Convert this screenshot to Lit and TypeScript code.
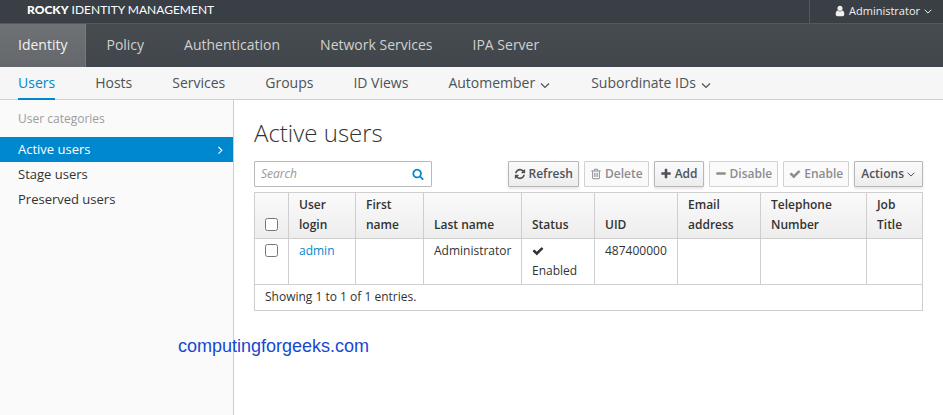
import { LitElement, html, css, svg, nothing } from "lit";
import { customElement, property } from "lit/decorators.js";

const glyphs: Record<string, string> = {
  user: "M1536 1399q0 109-62.5 187t-150.5 78h-854q-88 0-150.5-78t-62.5-187q0-85 8.5-160.5t31.5-152 58.5-131 94-89 134.5-34.5q131 128 313 128t313-128q76 0 134.5 34.5t94 89 58.5 131 31.5 152 8.5 160.5zm-256-887q0 159-112.5 271.5t-271.5 112.5-271.5-112.5-112.5-271.5 112.5-271.5 271.5-112.5 271.5 112.5 112.5 271.5z",
  refresh: "M1639 1056q0 5-1 7-64 268-268 434.5t-478 166.5q-146 0-282.5-55t-243.5-157l-129 129q-19 19-45 19t-45-19-19-45v-448q0-26 19-45t45-19h448q26 0 45 19t19 45-19 45l-137 137q71 66 161 102t187 36q134 0 250-65t186-179q11-17 53-117 8-23 30-23h192q13 0 22.5 9.5t9.5 22.5zm25-800v448q0 26-19 45t-45 19h-448q-26 0-45-19t-19-45 19-45l138-138q-148-137-349-137-134 0-250 65t-186 179q-11 17-53 117-8 23-30 23h-199q-13 0-22.5-9.5t-9.5-22.5v-7q65-268 270-434.5t480-166.5q146 0 284 55.5t245 156.5l130-129q19-19 45-19t45 19 19 45z",
  trash: "M704 736v576q0 14-9 23t-23 9h-64q-14 0-23-9t-9-23v-576q0-14 9-23t23-9h64q14 0 23 9t9 23zm256 0v576q0 14-9 23t-23 9h-64q-14 0-23-9t-9-23v-576q0-14 9-23t23-9h64q14 0 23 9t9 23zm256 0v576q0 14-9 23t-23 9h-64q-14 0-23-9t-9-23v-576q0-14 9-23t23-9h64q14 0 23 9t9 23zm128 724v-948h-896v948q0 22 7 40.5t14.5 27 10.5 8.5h832q3 0 10.5-8.5t14.5-27 7-40.5zm-672-1076h448l-48-117q-7-9-17-11h-317q-10 2-17 11zm928 32v64q0 14-9 23t-23 9h-96v948q0 83-47 143.5t-113 60.5h-832q-66 0-113-58.5t-47-141.5v-952h-96q-14 0-23-9t-9-23v-64q0-14 9-23t23-9h309l70-167q15-37 54-63t79-26h320q40 0 79 26t54 63l70 167h309q14 0 23 9t9 23z",
  plus: "M1600 736v192q0 40-28 68t-68 28h-416v416q0 40-28 68t-68 28h-192q-40 0-68-28t-28-68v-416h-416q-40 0-68-28t-28-68v-192q0-40 28-68t68-28h416v-416q0-40 28-68t68-28h192q40 0 68 28t28 68v416h416q40 0 68 28t28 68z",
  minus: "M1600 736v192q0 40-28 68t-68 28h-1216q-40 0-68-28t-28-68v-192q0-40 28-68t68-28h1216q40 0 68 28t28 68z",
  check: "M1671 566q0 40-28 68l-724 724-136 136q-28 28-68 28t-68-28l-136-136-362-362q-28-28-28-68t28-68l136-136q28-28 68-28t68 28l294 295 656-657q28-28 68-28t68 28l136 136q28 28 28 68z",
  search: "M1216 832q0-185-131.5-316.5t-316.5-131.5-316.5 131.5-131.5 316.5 131.5 316.5 316.5 131.5 316.5-131.5 131.5-316.5zm512 832q0 52-38 90t-90 38q-54 0-90-38l-343-342q-179 124-399 124-143 0-273.5-55.5t-225-150-150-225-55.5-273.5 55.5-273.5 150-225 225-150 273.5-55.5 273.5 55.5 225 150 150 225 55.5 273.5q0 220-124 399l343 343q37 37 37 90z",
};

const chevrons: Record<string, string> = {
  down: "M2 4.5 6 8.5 10 4.5",
  right: "M4.5 3 7.8 6.3 4.5 9.6",
};

@customElement("ipa-icon")
export class IpaIcon extends LitElement {
  @property() name = "";

  static styles = css`
    :host { display: inline-flex; flex: none; width: 12px; height: 12px; }
    .glyph { width: 100%; height: 100%; display: block; }
  `;

  render() {
    const line = chevrons[this.name];
    return line
      ? html`<svg class="glyph" viewBox="0 0 12 12" aria-hidden="true">
          ${svg`<path d=${line} fill="none" stroke="currentColor" stroke-width="1.2" />`}
        </svg>`
      : html`<svg class="glyph" viewBox="0 0 1792 1792" aria-hidden="true">
          ${svg`<path d=${glyphs[this.name]} fill="currentColor" />`}
        </svg>`;
  }
}

const primary = ["Identity", "Policy", "Authentication", "Network Services", "IPA Server"];
const secondary = [
  { label: "Users" },
  { label: "Hosts" },
  { label: "Services" },
  { label: "Groups" },
  { label: "ID Views" },
  { label: "Automember", menu: true },
  { label: "Subordinate IDs", menu: true },
];
const categories = ["Active users", "Stage users", "Preserved users"];
const actions = [
  { label: "Refresh", icon: "refresh", off: false },
  { label: "Delete", icon: "trash", off: true },
  { label: "Add", icon: "plus", off: false },
  { label: "Disable", icon: "minus", off: true },
  { label: "Enable", icon: "check", off: true },
];
const columns = [
  { label: "User login", width: 67 },
  { label: "First name", width: 68 },
  { label: "Last name", width: 98 },
  { label: "Status", width: 73 },
  { label: "UID", width: 83 },
  { label: "Email address", width: 83 },
  { label: "Telephone Number", width: 106 },
  { label: "Job Title", width: 56 },
];

@customElement("app-root")
export class AppRoot extends LitElement {
  static styles = css`
    :host {
      display: flex;
      flex-direction: column;
      position: relative;
      min-height: 100vh;
      background: #fff;
      color: #333;
      font: 12px/20px "Open Sans", "Noto Sans", sans-serif;
    }
    * { box-sizing: border-box; }
    a { color: inherit; text-decoration: none; }
    ul { list-style: none; margin: 0; padding: 0; }

    .masthead {
      display: flex;
      justify-content: space-between;
      height: 23px;
      background: #393f45;
      color: #fff;
    }
    .brand { padding-left: 27px; font: 12px/20px Lato, "Open Sans", sans-serif; }
    .brand b { font-weight: 900; }
    .account {
      display: flex;
      align-items: center;
      gap: 3px;
      padding: 0 10px 2px 24px;
      border: 0;
      border-left: 1px solid #53595f;
      background: none;
      color: #f0f0f0;
      font: 11px/20px "Open Sans", sans-serif;
    }
    .account .caret { width: 10px; height: 10px; }

    .primary {
      display: flex;
      height: 44px;
      border-top: 1px solid #53595d;
      background: linear-gradient(#474c50, #41464c);
      color: #d1d1d1;
      font-size: 14px;
      line-height: 42px;
    }
    .primary a { padding: 0 20px; }
    .primary a:first-child { padding: 0 18px; border-right: 1px solid #74797c; }
    .primary .current { background: linear-gradient(#6e7275, #64686c); color: #f1f1f1; }

    .secondary {
      display: flex;
      gap: 40px;
      height: 33px;
      padding: 0 18px;
      border-bottom: 1px solid #cecece;
      background: #f6f6f6;
      color: #4d5258;
      font-size: 14px;
      line-height: 32px;
    }
    .secondary a { display: flex; gap: 4px; height: 33px; white-space: nowrap; }
    .secondary .current { color: #0088ce; border-bottom: 2px solid #0088ce; }
    .secondary ipa-icon { margin-top: 12px; }

    .body { display: flex; flex: 1; }
    .side {
      flex: none;
      width: 234px;
      border-right: 1px solid #cecece;
      background: #fafafa;
      font-size: 13px;
      line-height: 25px;
    }
    .side h2 { margin: 0; padding: 6px 18px; color: #9c9c9c; font: 12px/25px "Open Sans", sans-serif; }
    .side a { display: flex; align-items: center; justify-content: space-between; padding: 0 7px 0 18px; }
    .side .current { background: #0088ce; color: #fff; }

    .main { flex: 1; min-width: 0; padding: 18px 20px; }
    h1 { margin: 0 0 14px; font-size: 24px; line-height: 29px; font-weight: 300; }

    .toolbar { display: flex; align-items: center; justify-content: space-between; margin-bottom: 5px; }
    .search {
      display: flex;
      align-items: center;
      width: 178px;
      height: 26px;
      border: 1px solid #bababa;
      border-radius: 1px;
    }
    .search input {
      flex: 1;
      min-width: 0;
      padding: 0 6px;
      border: 0;
      outline: 0;
      background: none;
      color: #333;
      font: 12px/20px "Open Sans", sans-serif;
    }
    .search input::placeholder { color: #999; font-style: italic; opacity: 1; }
    .search button { display: flex; padding: 0 7px; border: 0; background: none; color: #0088ce; }
    .buttons { display: flex; gap: 5px; }
    .btn {
      display: flex;
      align-items: center;
      gap: 3px;
      height: 26px;
      padding: 0 5px;
      border: 1px solid #b7b7b7;
      border-radius: 1px;
      background: linear-gradient(#fafafa, #ededed);
      box-shadow: 0 2px 3px rgba(3, 3, 3, 0.1);
      color: #4d5258;
      font: 600 12px/22px "Open Sans", sans-serif;
      white-space: nowrap;
    }
    .btn:disabled { border-color: #d1d1d1; background: #fafafa; box-shadow: none; color: #8b8d8f; }
    .btn .caret { width: 10px; height: 10px; }
    .btn.menu { gap: 2px; padding: 0 6px; }

    table { width: 100%; table-layout: fixed; border-collapse: collapse; border: 1px solid #cecece; }
    .pick { width: 34px; }
    th, td { padding: 2px 10px 3px; border: 1px solid #cecece; text-align: left; }
    th { vertical-align: bottom; font-weight: 600; }
    td { vertical-align: top; }
    thead { background: linear-gradient(#fafafa, #ededed); }
    tbody a { color: #0088ce; }
    td input, th input { display: block; width: 13px; height: 13px; margin: 3px 0 4px; }
    .state { display: block; }
    td ipa-icon { display: block; margin: 4px 0; }

    .watermark {
      position: absolute;
      left: 178px;
      top: 335px;
      color: #1549d0;
      font: 18px/22px "Liberation Sans", Arial, sans-serif;
    }
  `;

  render() {
    return html`
      <header class="masthead">
        <div class="brand"><b>ROCKY</b> IDENTITY MANAGEMENT</div>
        <button class="account">
          <ipa-icon name="user"></ipa-icon>Administrator
          <ipa-icon class="caret" name="down"></ipa-icon>
        </button>
      </header>
      <nav class="primary" aria-label="Primary">
        ${primary.map((p, i) => html`<a href="#" class=${i ? nothing : "current"}>${p}</a>`)}
      </nav>
      <nav class="secondary" aria-label="Secondary">
        ${secondary.map(
          (s, i) => html`<a href="#" class=${i ? nothing : "current"}>${s.label}${s.menu
            ? html`<ipa-icon name="down"></ipa-icon>` : nothing}</a>`
        )}
      </nav>
      <div class="body">
        <aside class="side">
          <h2>User categories</h2>
          <ul>
            ${categories.map(
              (c, i) => html`<li><a href="#" class=${i ? nothing : "current"}>${c}${i
                ? nothing : html`<ipa-icon name="right"></ipa-icon>`}</a></li>`
            )}
          </ul>
        </aside>
        <main class="main">
          <h1>Active users</h1>
          <div class="toolbar">
            <div class="search">
              <input type="text" placeholder="Search" aria-label="Search" />
              <button aria-label="Find"><ipa-icon name="search"></ipa-icon></button>
            </div>
            <div class="buttons">
              ${actions.map(
                (a) => html`<button class="btn" ?disabled=${a.off}><ipa-icon name=${a.icon}></ipa-icon>${a.label}</button>`
              )}
              <button class="btn menu">Actions<ipa-icon class="caret" name="down"></ipa-icon></button>
            </div>
          </div>
          <table>
            <colgroup>
              <col class="pick" />
              ${columns.map((c) => html`<col style="width:${c.width}px" />`)}
            </colgroup>
            <thead>
              <tr>
                <th><input type="checkbox" aria-label="Select all" /></th>
                ${columns.map((c) => html`<th scope="col">${c.label}</th>`)}
              </tr>
            </thead>
            <tbody>
              <tr>
                <td><input type="checkbox" aria-label="Select admin" /></td>
                <td><a href="#">admin</a></td>
                <td></td>
                <td>Administrator</td>
                <td><ipa-icon name="check"></ipa-icon><span class="state">Enabled</span></td>
                <td>487400000</td>
                <td></td>
                <td></td>
                <td></td>
              </tr>
            </tbody>
            <tfoot>
              <tr><td colspan="9">Showing 1 to 1 of 1 entries.</td></tr>
            </tfoot>
          </table>
        </main>
      </div>
      <div class="watermark">computingforgeeks.com</div>
    `;
  }
}
